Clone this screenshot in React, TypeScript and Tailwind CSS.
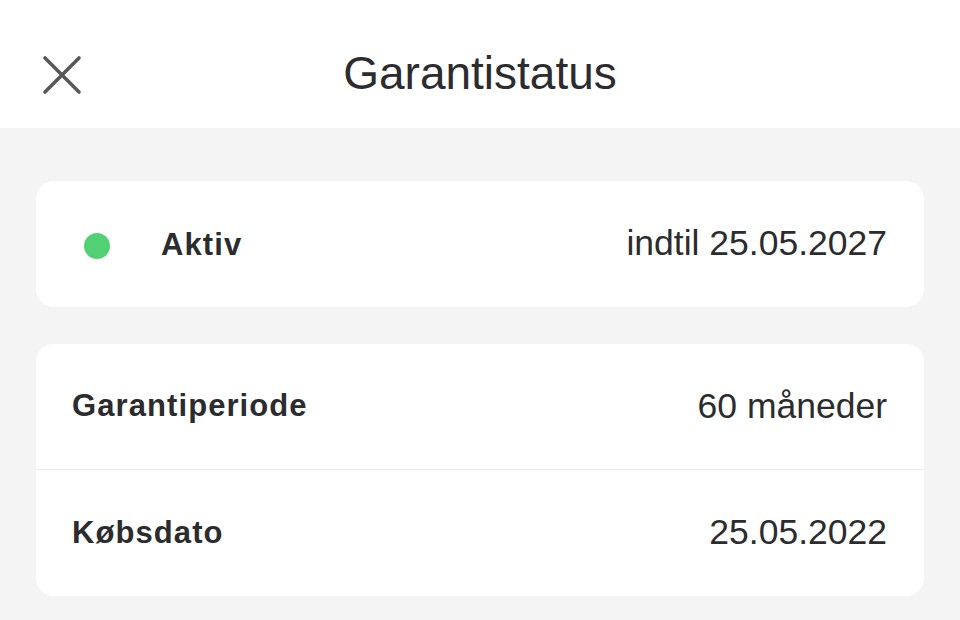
import React from 'react';

const font = { fontFamily: '"Liberation Sans", Arial, sans-serif' };

const Row: React.FC<{ label: string; value: string; divider?: boolean }> = ({ label, value, divider }) => (
  <div className={`h-[126px] flex items-center justify-between pl-[36px] pr-[37px] ${divider ? 'border-b border-[#ededed]' : ''}`}>
    <span className="text-[31px] font-bold tracking-[0.035em] text-[#2c2c2f]">{label}</span>
    <span className="text-[35.5px] text-[#2c2c2f]">{value}</span>
  </div>
);

export default function App() {
  return (
    <div className="w-[960px] h-[620px] bg-[#f4f4f4] flex flex-col overflow-hidden" style={font}>
      <div className="h-[128px] bg-white relative flex items-center justify-center shrink-0">
        <button className="absolute left-[42px] top-[55px] w-[40px] h-[40px] flex items-center justify-center">
          <svg width="40" height="40" viewBox="0 0 40 40" fill="none" stroke="#58585a" strokeWidth="3.6" strokeLinecap="round">
            <path d="M3 3L37 37M37 3L3 37" />
          </svg>
        </button>
        <h1 className="text-[46px] text-[#2c2c2f] mt-[18px]">Garantistatus</h1>
      </div>

      <div className="flex flex-col gap-[37px] px-[36px] pt-[53px]">
        <div className="h-[126px] bg-white rounded-[18px] flex items-center justify-between pl-[48px] pr-[37px]">
          <div className="flex items-center gap-[51px] pt-[3px]">
            <span className="w-[26px] h-[26px] rounded-full bg-[#52d174]" />
            <span className="text-[31px] font-bold tracking-[0.035em] text-[#2c2c2f]">Aktiv</span>
          </div>
          <span className="text-[35.5px] text-[#2c2c2f]">indtil 25.05.2027</span>
        </div>

        <div className="bg-white rounded-[18px] flex flex-col">
          <Row label="Garantiperiode" value="60 måneder" divider />
          <Row label="Købsdato" value="25.05.2022" />
        </div>
      </div>
    </div>
  );
}
